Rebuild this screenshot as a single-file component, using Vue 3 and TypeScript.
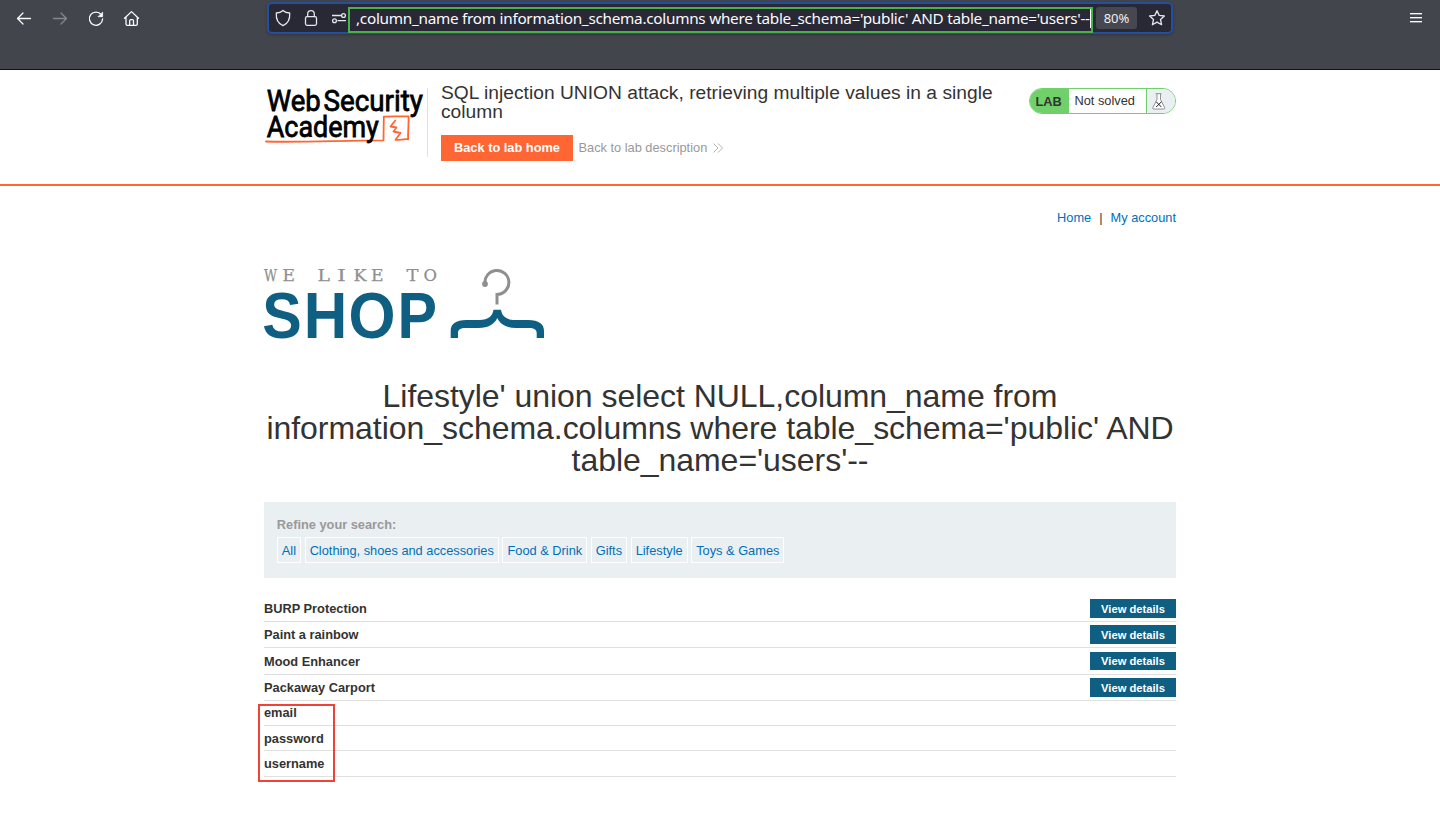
<script setup lang="ts">
interface Row {
  name: string
  height: number
  top: number
  buttonHeight?: number
}

const query = ",column_name from information_schema.columns where table_schema='public' AND table_name='users'--"
const filters: string[] = ['All', 'Clothing, shoes and accessories', 'Food & Drink', 'Gifts', 'Lifestyle', 'Toys & Games']
const rows: Row[] = [
  { name: 'BURP Protection', height: 26, top: 3, buttonHeight: 19 },
  { name: 'Paint a rainbow', height: 26, top: 3, buttonHeight: 19 },
  { name: 'Mood Enhancer', height: 27, top: 4, buttonHeight: 18 },
  { name: 'Packaway Carport', height: 26, top: 3, buttonHeight: 19 },
]
const leaked: Row[] = [
  { name: 'email', height: 25, top: 2 },
  { name: 'password', height: 25, top: 3 },
  { name: 'username', height: 26, top: 3 },
]
</script>

<template>
  <div class="window">
    <div class="chrome">
      <svg class="nav" width="160" height="36" viewBox="0 0 160 36" fill="none" stroke="#fbfbfe" stroke-width="1.3" stroke-linecap="round" stroke-linejoin="round">
        <path d="M17.5 18.5H30.5M23 13l-5.500 5.500 5.500 5.500" />
        <path d="M53.500 18.500H66.500M61 13l5.500 5.500-5.500 5.500" stroke="#85868c" />
        <path d="M101.300 14.700A6.600 6.600 0 1 0 102.600 19" />
        <path d="M102.600 12.500V16.700H98.400Z" fill="#fbfbfe" stroke-width=".8" />
        <path d="M124.500 18.200L131.500 11.600L138.500 18.200M126 17.300V24a1.300 1.300 0 0 0 1.300 1.300H136a1.300 1.300 0 0 0 1.300-1.300V17.300M129.700 25V20.700a1 1 0 0 1 1-1h1.800a1 1 0 0 1 1 1V25" />
      </svg>
      <div class="urlbar">
        <svg class="site-icons" width="79" height="28" viewBox="0 0 79 28" fill="none" stroke="#e6e6eb" stroke-width="1.300" stroke-linejoin="round">
          <path d="M14 6.500c1.800 1.700 4.200 2.400 6.700 2.500c.4 6-1.600 10.500-6.700 12.700c-5.100-2.200-7.100-6.700-6.700-12.700c2.500-.1 4.900-.8 6.700-2.500Z" />
          <rect x="36.500" y="12.700" width="11" height="8.600" rx="1.500" />
          <path d="M38.700 12.500V10a3.300 3.300 0 0 1 6.600 0v2.500" />
          <path d="M63 11.500h9.500M68.500 16.700h8.500" />
          <circle cx="74.500" cy="11.500" r="1.900" />
          <circle cx="65.500" cy="16.700" r="1.900" />
        </svg>
        <div class="query"><span>{{ query }}</span><i class="caret"></i></div>
        <div class="zoom">80%</div>
        <svg class="star" width="18" height="18" viewBox="0 0 18 18" fill="none" stroke="#e6e6eb" stroke-width="1.300" stroke-linejoin="round">
          <path d="M9 1.700l2.200 4.700 5.200.6-3.900 3.500 1.100 5.200L9 13.100l-4.600 2.600 1.100-5.200L1.600 7l5.200-.6Z" />
        </svg>
      </div>
      <svg class="menu" width="12" height="11" viewBox="0 0 12 11">
        <path d="M0 0h12v1H0zM0 4h12v1H0zM0 8h12v1H0z" fill="#fbfbfe" />
        <path d="M0 1h12v1H0zM0 5h12v1H0zM0 9h12v1H0z" fill="#85868c" />
      </svg>
    </div>

    <header class="lab-header">
      <div class="lab-inner">
        <svg class="academy" width="163" height="70" viewBox="264 87 163 70">
          <g fill="none" stroke="#ff6633" stroke-width="1.800" stroke-linejoin="round" stroke-linecap="round">
            <path d="M266 141.500C300 142.500 340 140.500 383.500 140.300L383.800 116.700C392 116 400 116.600 408.500 116.300C409 124 407.700 132 408.200 139.300C403 138.800 400 140.200 395.500 139.800L400.500 133L393.500 131.500L396.500 127.500L390.500 126.500L395.300 120.500" />
          </g>
          <g class="academy-text">
            <text x="266.800" y="110.800" textLength="54" lengthAdjust="spacingAndGlyphs">Web</text>
            <text x="323.500" y="110.800" textLength="99.500" lengthAdjust="spacingAndGlyphs">Security</text>
            <text x="266.800" y="136.800" textLength="112" lengthAdjust="spacingAndGlyphs">Academy</text>
          </g>
        </svg>
        <div class="lab-title">
          <h2>SQL injection UNION attack, retrieving multiple values in a single column</h2>
          <div class="lab-links">
            <a class="home-button">Back to lab home</a>
            <a class="description">Back to lab description</a>
            <svg width="10" height="10" viewBox="0 0 10 10" fill="none" stroke="#aaa" stroke-width=".9"><path d="M.5.500L5 5 .5 9.500M5 .5L9.500 5 5 9.500" /></svg>
          </div>
        </div>
        <div class="status">
          <b>LAB</b>
          <span>Not solved</span>
          <div class="flask">
            <svg width="14" height="17" viewBox="0 0 14 17" fill="none" stroke="#777" stroke-width=".8">
              <path d="M3.700 .700h5.800M5 1v5.500L.8 14.700q-.4 1.300 1 1.300h9.900q1.400 0 1-1.300L8.500 6.500V1" fill="#fff" />
              <path d="M4.200 8.800l5.200 5.200M9.400 8.800l-5.200 5.200" stroke="#222" stroke-width="1" />
            </svg>
          </div>
        </div>
      </div>
    </header>

    <main>
      <nav class="account"><a>Home</a><span>|</span><a>My account</a></nav>
      <svg class="shop" width="282" height="74" viewBox="264 267 282 74">
        <g class="tagline">
          <text x="264" y="281.300" textLength="13" lengthAdjust="spacingAndGlyphs">W</text>
          <text x="282.500" y="281.300" textLength="12.500" lengthAdjust="spacingAndGlyphs">E</text>
          <text x="317.500" y="281.300" textLength="12.500" lengthAdjust="spacingAndGlyphs">L</text>
          <text x="337.200" y="281.300" textLength="8.500" lengthAdjust="spacingAndGlyphs">I</text>
          <text x="353.500" y="281.300" textLength="13" lengthAdjust="spacingAndGlyphs">K</text>
          <text x="371" y="281.300" textLength="12.500" lengthAdjust="spacingAndGlyphs">E</text>
          <text x="406.500" y="281.300" textLength="12" lengthAdjust="spacingAndGlyphs">T</text>
          <text x="423.500" y="281.300" textLength="13.500" lengthAdjust="spacingAndGlyphs">O</text>
        </g>
        <g class="shop-word">
          <text x="262.300" y="338" textLength="39.500" lengthAdjust="spacingAndGlyphs">S</text>
          <text x="303.800" y="338" textLength="43.500" lengthAdjust="spacingAndGlyphs">H</text>
          <text x="348.500" y="338" textLength="47" lengthAdjust="spacingAndGlyphs">O</text>
          <text x="397.500" y="338" textLength="39.500" lengthAdjust="spacingAndGlyphs">P</text>
        </g>
        <path d="M485 283.500A12 12 0 1 1 497 294V304" fill="none" stroke="#8f8f8f" stroke-width="3" transform="translate(0 .4)" />
        <circle cx="485" cy="284" r="2.900" fill="#8f8f8f" />
        <path d="M493.500 309.800H501C502 316 506 320 515 320H528C539 320 544 324 544 331V338H536.700V333C536.700 329.500 534 328 529 328H516C506 328 500 324 497.300 318C494.500 324 488.500 328 478.500 328H465.500C460.500 328 458 329.500 458 333V338H450.700V331C450.700 324 455.500 320 466.500 320H479.500C488.500 320 492.500 316 493.500 309.800Z" fill="#0f5f83" />
      </svg>
      <h1>Lifestyle' union select NULL,column_name from information_schema.columns where table_schema='public' AND table_name='users'--</h1>
      <section class="search">
        <label>Refine your search:</label>
        <div class="filters"><a v-for="f in filters" :key="f">{{ f }}</a></div>
      </section>
      <section class="products">
        <div v-for="r in rows" :key="r.name" class="row" :style="{ height: r.height + 'px', paddingTop: r.top + 'px' }">
          <b>{{ r.name }}</b>
          <a class="details" :style="{ height: r.buttonHeight + 'px', lineHeight: (r.buttonHeight ?? 19) + 1 + 'px' }">View details</a>
        </div>
        <div class="leaked">
          <div v-for="r in leaked" :key="r.name" class="row" :style="{ height: r.height + 'px', paddingTop: r.top + 'px' }"><b>{{ r.name }}</b></div>
          <div class="highlight"></div>
        </div>
      </section>
    </main>
  </div>
</template>

<style>
body { margin: 0; background: #fff; overflow: hidden; }
</style>

<style scoped>
* { box-sizing: border-box; }
.window { width: 1440px; height: 819px; overflow: hidden; font: 12.8px/16px "Liberation Sans", Arial, sans-serif; color: #333332; }
.chrome { height: 70px; background: #42454c; border-bottom: 1px solid #101114; display: flex; align-items: flex-start; }
svg { display: block; flex: none; overflow: visible; }
.nav { margin-right: 107px; }
.urlbar { width: 906px; height: 32px; margin-top: 2px; border: 2px solid #244f9c; border-radius: 5px; background: #282935; display: flex; align-items: center; box-shadow: 0 1px 3px #0004; }
.query { width: 745px; height: 26px; margin-top: 4px; border: 2px solid #4caf50; display: flex; align-items: center; padding-left: 6px; color: #fbfbfe; font: 15.3px/22px "Noto Sans", sans-serif; letter-spacing: -.27px; white-space: nowrap; }
.query span { margin-top: -4px; }
.caret { width: 1px; height: 19px; background: #fff; margin-top: -3px; }
.zoom { width: 41px; height: 22px; margin: 0 11px 0 3px; border-radius: 3px; background: #464851; color: #eeeef2; text-align: center; font: 13px/22px "Noto Sans", sans-serif; }
.menu { margin: 13px 0 0 237px; }
.lab-header { height: 116px; border-bottom: 2px solid #ff6633; }
.lab-inner { width: 912px; margin: 0 auto; display: flex; padding-top: 17px; }
.academy-text { font: 400 29.500px Roboto, sans-serif; fill: #000; stroke: #000; stroke-width: .8; }
.lab-title { width: 588px; height: 69px; margin-top: 1px; padding: 0 13px; border-left: 1px solid #e2e2e2; }
h2 { font-size: 19.200px; line-height: 19.200px; font-weight: 400; margin: -5px 0 14px; width: 560px; letter-spacing: .015px; }
.lab-links { display: flex; align-items: center; }
.home-button { background: #ff6633; color: #fff; font-weight: 700; width: 132px; height: 26px; line-height: 25px; text-align: center; }
.description { color: #999; margin: 0 6px 0 5.500px; line-height: 25px; height: 26px; }
.status { width: 147px; height: 26px; margin: 1px 0 0 14px; border: 1px solid #70d16b; border-radius: 13px; overflow: hidden; display: flex; line-height: 24px; }
.status b { width: 39px; padding-left: 5.500px; background: #70d16b; line-height: 26px; }
.status span { width: 77px; padding-left: 5.500px; }
.flask { width: 29px; margin-left: auto; border-left: 1px solid #70d16b; background: #eaeff2; padding: 4px 0 0 5px; }
main { width: 912px; margin: 0 auto; padding-top: 24px; }
.account { display: flex; justify-content: flex-end; gap: 8px; }
a { color: #006fb9; }
a.home-button, a.details { color: #fff; }
a.description { color: #999; }
.shop { margin-top: 41px; }
.tagline { font: 16.500px "DejaVu Serif", serif; fill: #8f8f8f; stroke: #8f8f8f; stroke-width: .25; }
.shop-word { font: 700 64px "Liberation Sans", sans-serif; fill: #0f5f83; }
h1 { font-size: 32px; line-height: 32px; font-weight: 400; text-align: center; margin: 39px 0 25.500px; letter-spacing: -.04px; }
.search { height: 76px; background: #eaeff2; padding: 14px 12.800px; }
.search label { display: block; font-weight: 700; color: #999; line-height: 17px; }
.filters { display: flex; gap: 3.600px; margin-top: 4px; }
.filters a { border: 1px solid #fff; height: 26px; line-height: 26px; padding: 0 4px; }
.products { margin-top: 18px; }
.row { border-bottom: 1px solid #e0e0e0; display: flex; justify-content: space-between; align-items: flex-start; line-height: 19px; }
.details { width: 86px; background: #0f5f83; font-size: 11.200px; font-weight: 700; text-align: center; }
.leaked { position: relative; }
.highlight { position: absolute; left: -6px; top: 3px; width: 77px; height: 78px; border: 2px solid #ef4335; }
</style>
